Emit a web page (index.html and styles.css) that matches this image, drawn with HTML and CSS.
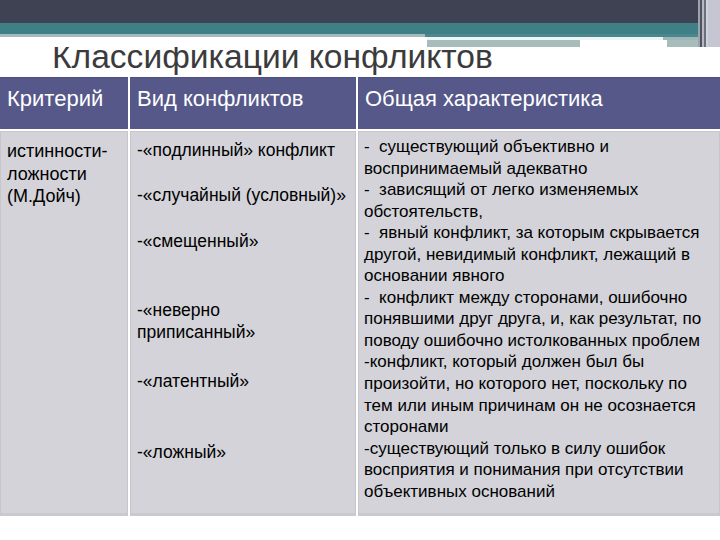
FILE: index.html
```html
<!DOCTYPE html>
<html lang="ru">
<head>
<meta charset="utf-8">
<title>Классификации конфликтов</title>
<link rel="stylesheet" href="styles.css">
</head>
<body>
<div class="slide">
  <div class="deco">
    <div class="bar-dark"></div>
    <div class="bar-teal"></div>
    <div class="strip s1"><span class="a"></span><span class="b"></span><span class="c"></span></div>
    <div class="strip s2"><span class="a"></span><span class="b"></span><span class="c"></span></div>
    <div class="strip s3"><span class="a"></span><span class="b"></span><span class="c"></span><span class="d"></span><span class="e"></span></div>
    <div class="corner"></div>
  </div>
  <h1 class="title">Классификации конфликтов</h1>
  <div class="table">
    <div class="th">Критерий</div>
    <div class="th">Вид конфликтов</div>
    <div class="th">Общая характеристика</div>
    <div class="td c1">истинности-<br>ложности<br>(М.Дойч)</div>
    <div class="td c2">
      <p class="i1">-«подлинный» конфликт</p>
      <p class="i2">-«случайный (условный)»</p>
      <p class="i3">-«смещенный»</p>
      <p class="i4">-«неверно<br>приписанный»</p>
      <p class="i5">-«латентный»</p>
      <p class="i6">-«ложный»</p>
    </div>
    <div class="td c3">-&nbsp; существующий объективно и<br>воспринимаемый адекватно<br>-&nbsp; зависящий от легко изменяемых<br>обстоятельств,<br>-&nbsp; явный конфликт, за которым скрывается<br>другой, невидимый конфликт, лежащий в<br>основании явного<br>-&nbsp; конфликт между сторонами, ошибочно<br>понявшими друг друга, и, как результат, по<br>поводу ошибочно истолкованных проблем<br>-конфликт, который должен был бы<br>произойти, но которого нет, поскольку по<br>тем или иным причинам он не осознается<br>сторонами<br>-существующий только в силу ошибок<br>восприятия и понимания при отсутствии<br>объективных оснований</div>
  </div>
</div>
</body>
</html>
```
FILE: styles.css
```css
* { box-sizing: border-box; }
html, body { margin: 0; padding: 0; background: #ffffff; }
body { width: 720px; height: 540px; overflow: hidden; font-family: "Liberation Sans", Arial, sans-serif; }
.slide { position: relative; width: 720px; height: 540px; background: #ffffff; }

.deco { position: relative; height: 47px; }
.bar-dark { height: 23px; background: #3f4253; }
.bar-teal { height: 11px; background: #3e8086; }
.strip { display: flex; }
.strip span { display: block; height: 100%; }
.s1 { height: 3px; }
.s1 .a { width: 425px; background: #a5babb; }
.s1 .b { width: 273px; background: #4b878c; }
.s1 .c { flex: 1; background: #c3c7cf; }
.s2 { height: 3px; }
.s2 .a { width: 427px; background: #ffffff; }
.s2 .b { width: 236px; background: #eef4f4; }
.s2 .c { flex: 1; background: #9fb5b8; }
.s3 { height: 7px; }
.s3 .a { width: 427px; background: #ffffff; }
.s3 .b { width: 153px; background: #a9bcbc; }
.s3 .c { width: 87px; background: #ffffff; }
.s3 .d { width: 31px; background: #a9bcbc; }
.s3 .e { flex: 1; background: #ffffff; }
.corner {
  position: absolute; right: 0; top: 0; width: 22px; height: 47px;
  background: linear-gradient(to right,
    #9fa3ae 0, #9fa3ae 2px, #50535f 2px, #50535f 4px,
    #b6b9c3 4px, #b6b9c3 6px, #6b6e7c 6px, #6b6e7c 8px,
    #d0d2d9 8px, #d0d2d9 10px, #c6c6d2 10px, #c6c6d2 22px);
}

.title {
  margin: 0; padding-left: 52px; height: 22px; line-height: 20px;
  font-size: 33.6px; font-weight: normal; color: #3b3b3d; white-space: nowrap;
}

.table {
  margin-top: 8px;
  display: grid;
  grid-template-columns: 128px 226px 1fr;
  grid-template-rows: 52px 385px;
  column-gap: 2px; row-gap: 2px;
}
.th {
  background: #56588a; color: #ffffff; font-size: 22px; line-height: 26px;
  padding: 8px 0 0 7px; white-space: nowrap; border-top: 1px solid #4e5080;
}
.td {
  background: #d3d3d9; color: #000000; white-space: nowrap;
  border: 1px solid #c6c6cc; border-bottom: 3px solid #c9c9ce;
}
.c1 { font-size: 18px; line-height: 22.5px; padding: 8px 0 0 6px; }
.c2 { font-size: 17.5px; line-height: 21.5px; padding: 8px 0 0 6px; }
.c2 p { margin: 0; }
.c2 .i2 { margin-top: 23.5px; }
.c2 .i3 { margin-top: 24.5px; }
.c2 .i4 { margin-top: 47.5px; }
.c2 .i5 { margin-top: 27.5px; }
.c2 .i6 { margin-top: 49.5px; }
.c3 { font-size: 17px; line-height: 21.54px; padding: 4px 0 0 5px; }
```
